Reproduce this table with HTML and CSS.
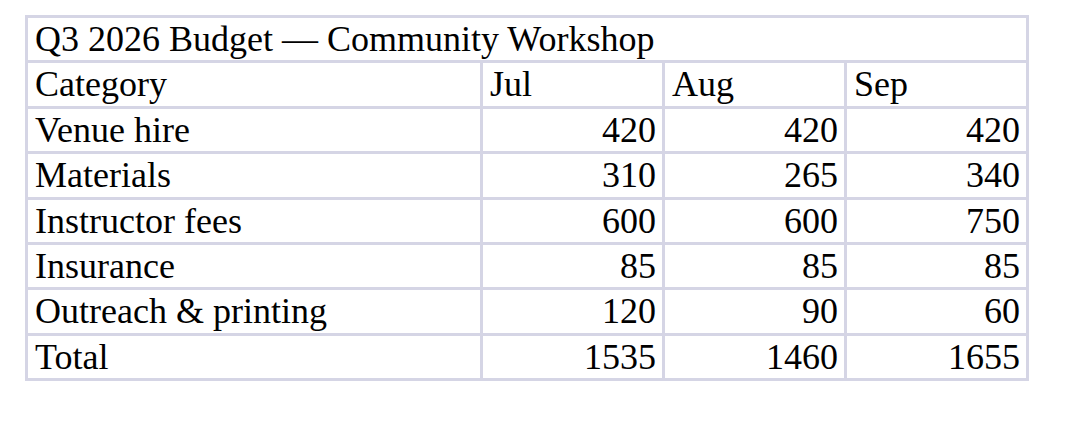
FILE: index.html
```html
<!DOCTYPE html>
<html>
<head>
<meta charset="utf-8">
<link rel="stylesheet" href="styles.css">
</head>
<body>
<table class="budget">
  <tr><th class="title" colspan="4">Q3 2026 Budget — Community Workshop</th></tr>
  <tr><th class="cat">Category</th><th class="mon">Jul</th><th class="mon">Aug</th><th class="mon">Sep</th></tr>
  <tr><td>Venue hire</td><td class="num">420</td><td class="num">420</td><td class="num">420</td></tr>
  <tr><td>Materials</td><td class="num">310</td><td class="num">265</td><td class="num">340</td></tr>
  <tr><td>Instructor fees</td><td class="num">600</td><td class="num">600</td><td class="num">750</td></tr>
  <tr><td>Insurance</td><td class="num">85</td><td class="num">85</td><td class="num">85</td></tr>
  <tr><td>Outreach &amp; printing</td><td class="num">120</td><td class="num">90</td><td class="num">60</td></tr>
  <tr><td>Total</td><td class="num">1535</td><td class="num">1460</td><td class="num">1655</td></tr>
</table>
</body>
</html>
```
FILE: styles.css
```css
body {
  margin: 0;
  padding: 15px 0 0 25px;
  background: #fff;
  font-family: "Liberation Serif", "Times New Roman", serif;
  color: #000;
}
.budget {
  border-collapse: collapse;
  border: 3px solid #d5d5e5;
  width: 1004px;
  font-size: 36px;
}
.budget th, .budget td {
  border: 3px solid #d5d5e5;
  padding: 1px 6px 1px 7px;
  font-weight: normal;
  text-align: left;
  line-height: 40.4px;
}
.budget .cat { width: 439px; }
.budget .num { text-align: right; }
```
